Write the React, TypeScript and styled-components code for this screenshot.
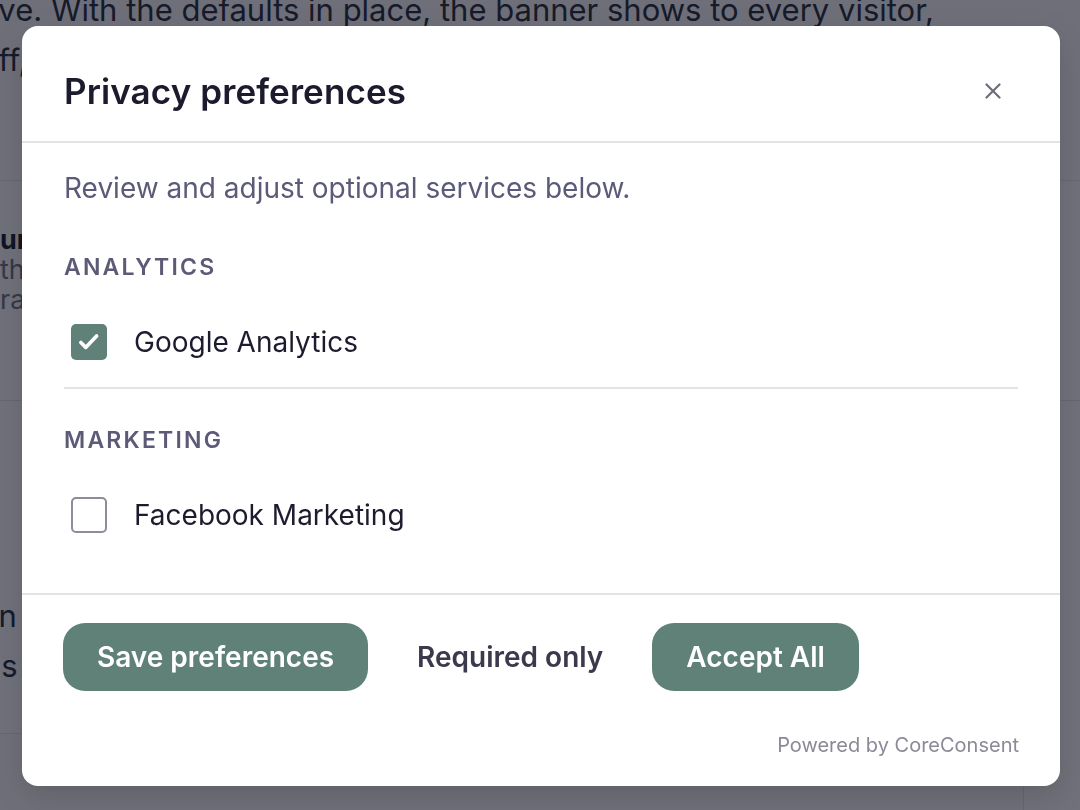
import React, { useState } from "react";
import styled, { createGlobalStyle } from "styled-components";

const GlobalStyle = createGlobalStyle`
	html, body {
		margin: 0;
		padding: 0;
		height: 100%;
		overflow: hidden;
		background: #ffffff;
		font-family: Inter, "Noto Sans", "Liberation Sans", sans-serif;
	}
	* {
		box-sizing: border-box;
	}
`;

const Page = styled.div`
	width: 1080px;
	height: 810px;
	color: #1f2937;
	overflow: hidden;
`;

const PageLine = styled.div<{ $indent: number }>`
	margin-left: ${(p) => p.$indent}px;
	font-size: 31px;
	line-height: 50px;
	white-space: nowrap;
`;

const Lead = styled.div`
	margin-top: -15px;
	height: 195px;
	background: #fbfbfc;
`;

const BackCard = styled.div`
	height: 221px;
	border-top: 1px solid #e5e7eb;
	border-bottom: 1px solid #e5e7eb;
	padding-top: 44px;
	font-size: 27px;
	line-height: 30px;
	color: #6b7280;
	strong {
		display: block;
		color: #111827;
		font-weight: 700;
	}
`;

const BackText = styled.div`
	height: 332px;
	padding-top: 190px;
	color: #1f2937;
`;

const BackFooter = styled.div`
	width: 1024px;
	height: 80px;
	border-top: 1px solid #e5e7eb;
	border-right: 1px solid #e5e7eb;
	background: #fbfbfc;
`;

const Overlay = styled.div`
	position: fixed;
	inset: 0;
	background: rgba(17, 18, 33, 0.6);
	display: flex;
	align-items: flex-start;
	padding: 26px 0 0 22px;
`;

const Modal = styled.div`
	width: 1038px;
	height: 760px;
	background: #ffffff;
	border-radius: 16px;
	display: flex;
	flex-direction: column;
	overflow: hidden;
	box-shadow: 0 10px 30px rgba(0, 0, 0, 0.15);
`;

const Header = styled.div`
	height: 117px;
	flex-shrink: 0;
	display: flex;
	align-items: center;
	justify-content: space-between;
	padding: 14px 42px 0;
	border-bottom: 2px solid #e4e4e7;
`;

const Title = styled.h2`
	margin: 0;
	font-size: 35px;
	font-weight: 600;
	color: #1c1b2e;
	letter-spacing: 0.1px;
`;

const CloseButton = styled.button`
	width: 40px;
	height: 40px;
	margin-right: 5px;
	border: none;
	background: transparent;
	display: flex;
	align-items: center;
	justify-content: center;
	cursor: pointer;
	color: #6e6d7a;
	padding: 0;
`;

const Body = styled.div`
	padding: 27px 42px 33px;
`;

const Intro = styled.p`
	margin: 0 0 10px;
	font-size: 28px;
	line-height: 36px;
	color: #5b5a78;
`;

const Section = styled.div<{ $divided?: boolean }>`
	padding: 36px 0 27px;
	border-bottom: ${(p) => (p.$divided ? "2px solid #e4e4e7" : "none")};
`;

const SectionTitle = styled.h3`
	margin: 0 0 42px;
	font-size: 23px;
	line-height: 30px;
	font-weight: 600;
	letter-spacing: 2.2px;
	text-transform: uppercase;
	color: #5c5a77;
`;

const Option = styled.label`
	display: flex;
	align-items: center;
	gap: 27px;
	height: 36px;
	padding-left: 7px;
	cursor: pointer;
	font-size: 28px;
	color: #1d1c2f;
`;

const Box = styled.span<{ $checked: boolean }>`
	width: 36px;
	height: 36px;
	border-radius: 5px;
	flex-shrink: 0;
	display: flex;
	align-items: center;
	justify-content: center;
	background: ${(p) => (p.$checked ? "#5f8177" : "#ffffff")};
	border: ${(p) => (p.$checked ? "none" : "2px solid #8d8c99")};
`;

const Footer = styled.div`
	border-top: 2px solid #e4e4e7;
	padding: 28px 41px 0;
`;

const Actions = styled.div`
	display: flex;
	gap: 15px;
`;

const Button = styled.button<{ $variant?: "primary" | "ghost" }>`
	height: 68px;
	padding: 0 34px;
	border: none;
	border-radius: 22px;
	font-family: inherit;
	font-size: 28px;
	font-weight: 600;
	cursor: pointer;
	background: ${(p) => (p.$variant === "ghost" ? "transparent" : "#5f8177")};
	color: ${(p) => (p.$variant === "ghost" ? "#3b3a4c" : "#ffffff")};
`;

const Powered = styled.div`
	margin-top: 41px;
	text-align: right;
	font-size: 20px;
	line-height: 26px;
	color: #8b8a96;
`;

const Check = () => (
	<svg width="26" height="26" viewBox="0 0 24 24" fill="none">
		<path d="M4.5 12.5l4.5 4.5 10-10.5" stroke="#fff" strokeWidth="3.4" strokeLinecap="round" strokeLinejoin="round" />
	</svg>
);

const Checkbox = ({ checked, onChange, label }: { checked: boolean; onChange: () => void; label: string }) => (
	<Option onClick={onChange}>
		<Box $checked={checked}>{checked && <Check />}</Box>
		{label}
	</Option>
);

const App = () => {
	const [analytics, setAnalytics] = useState(true);
	const [marketing, setMarketing] = useState(false);
	return (
		<>
			<GlobalStyle />
			<Page>
				<Lead>
					<PageLine $indent={-56}>above. With the defaults in place, the banner shows to every visitor,</PageLine>
					<PageLine $indent={-20}>off, until a choice is made.</PageLine>
				</Lead>
				<BackCard>
					<strong>unc</strong>
					<span>the</span>
					<br />
					<span>rat</span>
				</BackCard>
				<BackText>
					<PageLine $indent={-20}>on</PageLine>
					<PageLine $indent={-8}>'s</PageLine>
				</BackText>
				<BackFooter />
			</Page>
			<Overlay>
				<Modal>
					<Header>
						<Title>Privacy preferences</Title>
						<CloseButton aria-label="Close">
							<svg width="16" height="16" viewBox="0 0 16 16">
								<path d="M1.5 1.5l13 13M14.5 1.5l-13 13" stroke="currentColor" strokeWidth="2.2" strokeLinecap="round" />
							</svg>
						</CloseButton>
					</Header>
					<Body>
						<Intro>Review and adjust optional services below.</Intro>
						<Section $divided>
							<SectionTitle>Analytics</SectionTitle>
							<Checkbox label="Google Analytics" checked={analytics} onChange={() => setAnalytics(!analytics)} />
						</Section>
						<Section>
							<SectionTitle>Marketing</SectionTitle>
							<Checkbox label="Facebook Marketing" checked={marketing} onChange={() => setMarketing(!marketing)} />
						</Section>
					</Body>
					<Footer>
						<Actions>
							<Button>Save preferences</Button>
							<Button $variant="ghost">Required only</Button>
							<Button>Accept All</Button>
						</Actions>
						<Powered>Powered by CoreConsent</Powered>
					</Footer>
				</Modal>
			</Overlay>
		</>
	);
};

export default App;
